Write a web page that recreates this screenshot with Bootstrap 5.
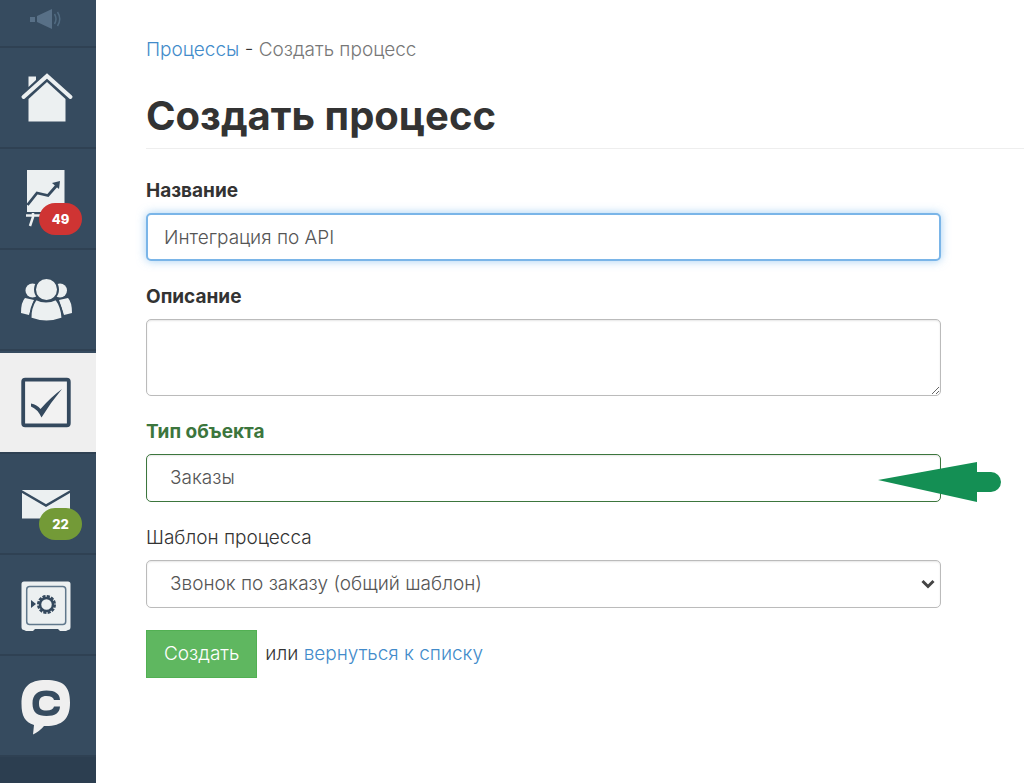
<!DOCTYPE html>
<html lang="ru">
<head>
<meta charset="utf-8">
<meta name="viewport" content="width=device-width, initial-scale=1">
<title>Создать процесс</title>
<link href="https://cdn.jsdelivr.net/npm/bootstrap@5.3.0/dist/css/bootstrap.min.css" rel="stylesheet">
<style>
  body { font-family: Inter, "Open Sans", sans-serif; font-size: 19px; font-weight: 300; line-height: 28px; color: #333; background: #fff; }
  a { color: #428bca; text-decoration: none; }
  .sidebar { width: 96px; background: #2c3e50; }
  .side-item { display: block; position: relative; height: 101px; background: #364b5f; border-bottom: 2px solid #2f4153; }
  .side-item svg { display: block; width: 96px; height: 101px; }
  .side-sound { height: 48px; }
  .side-sound svg { height: 48px; }
  .side-active { height: 103px; background: #efefef; border-top: 2px solid #364b5f; }
  .side-count { position: absolute; left: 39px; top: 54px; width: 43px; height: 32px; line-height: 32px; border-radius: 16px; color: #fff; font-size: 13px; font-weight: 800; text-align: center; }
  .count-red { background: #cf3433; }
  .count-green { background: #739a37; }
  .page { padding: 36px 0 36px 50px; }
  .crumb-now { color: #777; }
  .page-title { font-size: 40px; font-weight: 700; line-height: 48px; margin: 28px 0 28px; padding-bottom: 8px; border-bottom: 1px solid #eee; }
  .form-area { padding-right: 83px; }
  .field { margin-bottom: 22px; }
  .form-label { display: block; font-weight: 700; margin-bottom: 8px; }
  .form-control, .form-select { height: 48px; padding: 9px 17px; font-size: 19px; font-weight: 300; line-height: 28px; color: #555; border: 1px solid #bbb; border-radius: 5px; box-shadow: inset 0 1px 2px rgba(0,0,0,.1); }
  .form-select { padding-left: 23px; background-image: url("data:image/svg+xml,%3Csvg xmlns='http://www.w3.org/2000/svg' viewBox='0 0 14 10'%3E%3Cpath d='M1.5 2 7 7.5 12.5 2' fill='none' stroke='%23444' stroke-width='3'/%3E%3C/svg%3E"); background-size: 14px 10px; background-position: right 5px center; }
  textarea.form-control { height: 77px; }
  .field-current { border: 2px solid #7ab5e8; padding: 8px 16px; box-shadow: 0 0 10px rgba(102,175,233,.6); }
  .field-ok .form-label { color: #3c763d; }
  .field-ok .form-select { border-color: #3c763d; }
  .pointer { position: absolute; right: -60px; top: 8px; width: 123px; height: 40px; }
  .btn-create { height: 48px; padding: 0 17px; border-radius: 0; background: #5fb760; border-color: #52b053; color: #fff; font-size: 19px; font-weight: 300; }
</style>
</head>
<body>
<div class="d-flex min-vh-100">
  <nav class="sidebar flex-shrink-0" aria-label="Разделы">
    <a class="side-item side-sound" href="#" aria-label="Уведомления"><svg viewBox="0 0 96 48" fill="#587087"><path d="M30 17h5v5h-5zM37 16l15-7v20l-15-7z"/><path d="M54.500 14q3 5 0 10M57.500 12q4.500 7 0 14" fill="none" stroke="#506a80" stroke-width="1.500"/></svg></a>
    <a class="side-item" href="#" aria-label="Главная"><svg viewBox="0 0 96 101" fill="#ecf0f1"><path d="M28.500 28.500h7.500v3.500l-7.500 7z"/><path d="M23.500 49 47 28l23.500 21" fill="none" stroke="#ecf0f1" stroke-width="4" stroke-linecap="round"/><path d="M47 34 65.500 51v22.500h-37V51z"/></svg></a>
    <a class="side-item" href="#" aria-label="Отчёты"><svg viewBox="0 0 96 101"><path d="M27 21h37.500v42H27z" fill="#ecf0f1"/><path d="M27.500 56 37 44l11 2.500L58 35" fill="none" stroke="#364b5f" stroke-width="2.800"/><path d="m52 34 8-2-1 8z" fill="#364b5f"/><path d="M26 66.500h22M33 64v4l-3 9" fill="none" stroke="#ecf0f1" stroke-width="2.500"/></svg><span class="side-count count-red">49</span></a>
    <a class="side-item" href="#" aria-label="Клиенты"><svg viewBox="0 0 96 101" fill="#ecf0f1"><circle cx="32.500" cy="40.500" r="7"/><circle cx="60" cy="40.500" r="7"/><path d="m25 48 9 2-5 15-8-2q0-11 4-15zM68 48l-9 2 5 15 8-2q0-11-4-15z"/><path d="M36 49q10 5 20 0 6 8 6.500 19.500-16 6-32 0Q30 58 36 49z" stroke="#364b5f" stroke-width="2"/><circle cx="46.500" cy="39.500" r="11.500" stroke="#364b5f" stroke-width="2"/></svg></a>
    <a class="side-item side-active" href="#" aria-label="Процессы" aria-current="page"><svg viewBox="0 0 96 101"><rect x="23.200" y="26.700" width="45.600" height="45.600" rx="2" fill="#f2f2f2" stroke="#34495e" stroke-width="3.800"/><path d="M31 50.500q6 1 9.500 5.500Q51 44 62 36 51 49 41.500 64.500q-4-8.500-10.500-11z" fill="#34495e"/></svg></a>
    <a class="side-item" href="#" aria-label="Сообщения"><svg viewBox="0 0 96 101"><path d="M22 36h48v28.500H22z" fill="#ecf0f1"/><path d="m21 37 25 14.500L71 37" fill="none" stroke="#364b5f" stroke-width="2.500"/></svg><span class="side-count count-green">22</span></a>
    <a class="side-item" href="#" aria-label="Финансы"><svg viewBox="0 0 96 101"><path d="M24 26.500h44q2.500 0 2.500 2.500v43q0 3-2.500 3l-2 1h-6l-2-2H35l-2 2h-7l-2-1q-2.500 0-2.500-3V29q0-2.500 2.500-2.500z" fill="#ecf0f1"/><rect x="26.700" y="31.500" width="39" height="38" rx="3" fill="none" stroke="#60788c" stroke-width="1.500"/><path d="m31 45 5 4-5 4z" fill="#34495e"/><circle cx="46.500" cy="49.500" r="6.500" fill="none" stroke="#34495e" stroke-width="2.500"/><circle cx="46.500" cy="49.500" r="8" fill="none" stroke="#34495e" stroke-width="3" stroke-dasharray="3 1.189"/></svg></a>
    <a class="side-item" href="#" aria-label="Чат"><svg viewBox="0 0 96 101"><path d="M46 24c17 0 24 6 24 22.500S62 70 46 70h-2q-4 5-11 8.500L34 69c-9-3-12.500-9-12.500-21C21.500 31 29 24 46 24z" fill="#efefef"/><path d="M60 44h-6q-1-4-7.500-4c-5 0-7.500 2-7.500 7.500s2.500 7 7.500 7q6.500 0 7.500-4h6q-.5 9.500-13.500 9.500c-9 0-14-3.500-14-12.500s5-13 14-13Q59.500 34.500 60 44z" fill="#364b5f"/></svg></a>
  </nav>
  <main class="page flex-grow-1">
    <nav aria-label="Навигация"><a href="#">Процессы</a> - <span class="crumb-now">Создать процесс</span></nav>
    <h1 class="page-title">Создать процесс</h1>
    <form class="form-area">
      <div class="field">
        <label class="form-label" for="name">Название</label>
        <input class="form-control field-current" id="name" type="text" value="Интеграция по API">
      </div>
      <div class="field">
        <label class="form-label" for="about">Описание</label>
        <textarea class="form-control" id="about"></textarea>
      </div>
      <div class="field field-ok">
        <label class="form-label" for="kind">Тип объекта</label>
        <div class="position-relative">
          <select class="form-select" id="kind"><option>Заказы</option></select>
          <svg class="pointer" viewBox="0 0 123 40" aria-hidden="true"><path d="M0 18 99 0v10h14a10 10 0 0 1 0 20H99v10z" fill="#148f54"/></svg>
        </div>
      </div>
      <div class="field">
        <label class="form-label fw-light" for="template">Шаблон процесса</label>
        <select class="form-select" id="template"><option>Звонок по заказу (общий шаблон)</option></select>
      </div>
      <div class="d-flex align-items-center gap-2">
        <button class="btn btn-create" type="button">Создать</button>
        <span>или <a href="#">вернуться к списку</a></span>
      </div>
    </form>
  </main>
</div>
<script src="https://cdn.jsdelivr.net/npm/bootstrap@5.3.0/dist/js/bootstrap.bundle.min.js"></script>
</body>
</html>
